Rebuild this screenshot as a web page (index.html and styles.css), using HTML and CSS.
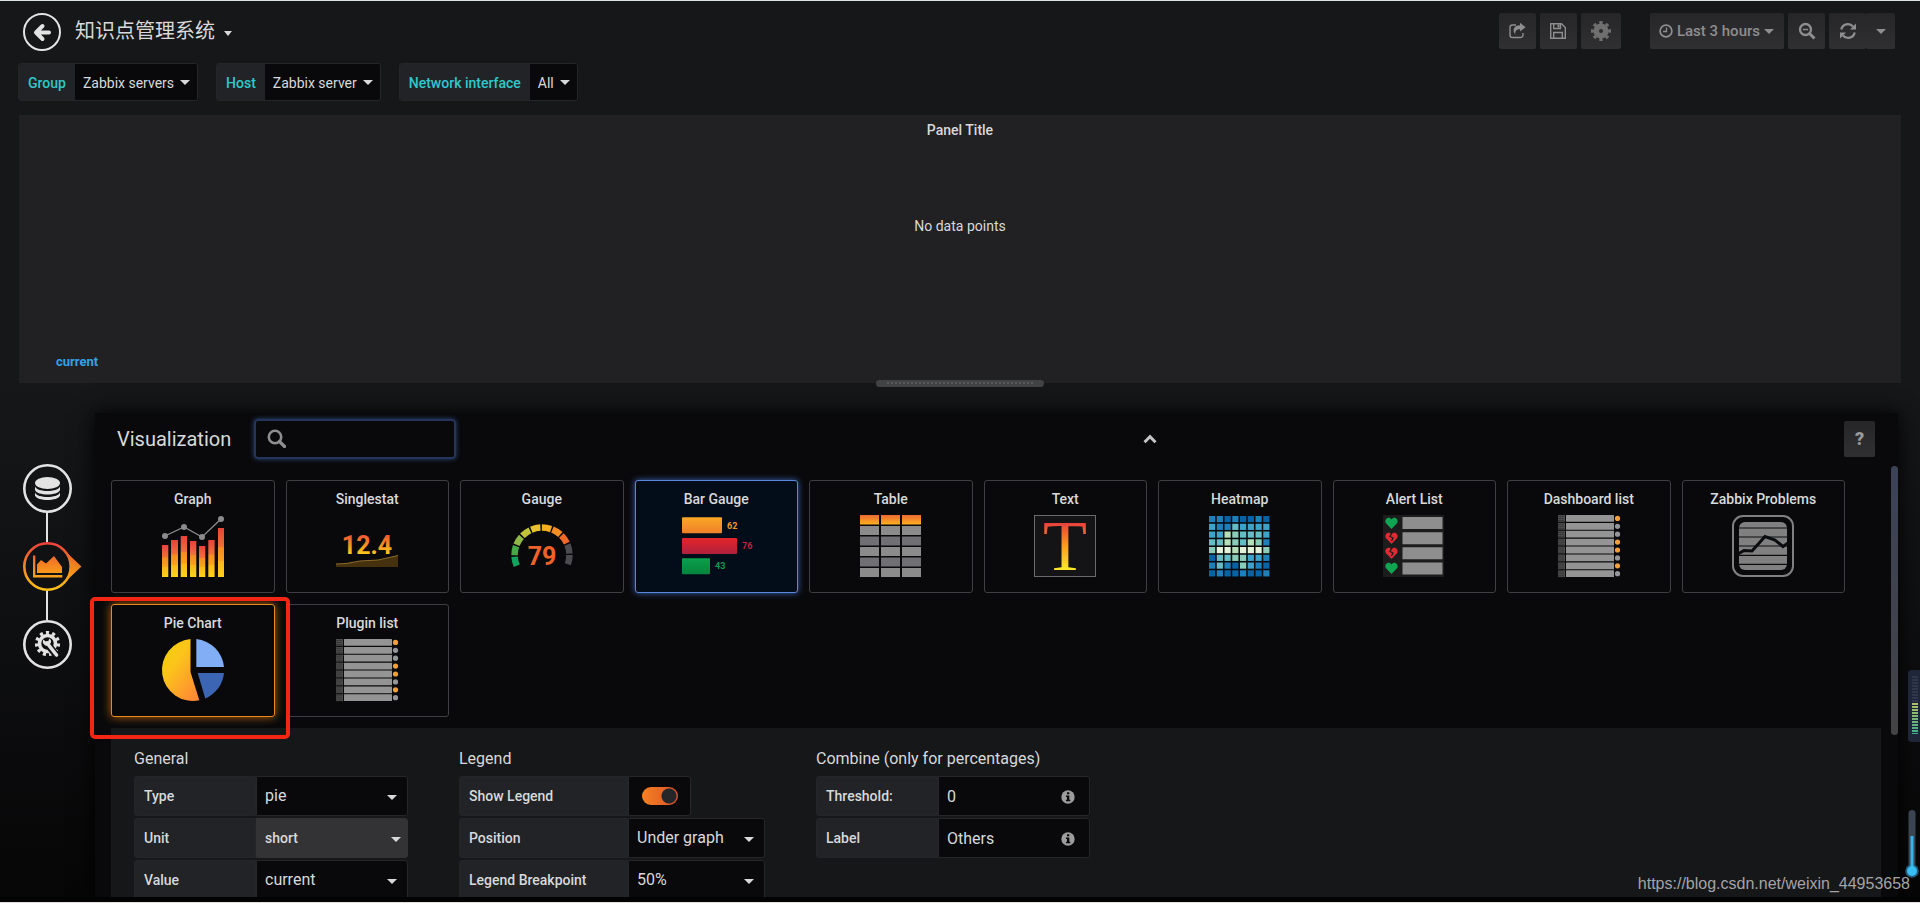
FILE: index.html
```
<!DOCTYPE html>
<html lang="zh-CN">
<head>
<meta charset="utf-8">
<title>知识点管理系统</title>
<link rel="stylesheet" href="styles.css">
</head>
<body>
<header class="navbar">
  <button class="back" aria-label="Back"><svg viewBox="0 0 20 20" width="20" height="20"><path d="M10.500 4 4 10.500 10.500 17M5 10.500H17" fill="none" stroke="currentColor" stroke-width="4" stroke-linecap="round" stroke-linejoin="round"/></svg></button>
  <button class="dash-title">知识点管理系统<span class="caret"></span></button>
  <div class="nav-group">
    <button class="nav-btn" aria-label="Share"><svg viewBox="0 0 18 18" width="18" height="18"><path d="M8 3H4.500A2.500 2.500 0 0 0 2 5.500V13a2.500 2.500 0 0 0 2.500 2.500h8A2.500 2.500 0 0 0 15 13v-2" fill="none" stroke="currentColor" stroke-width="1.400"/><path d="M12 .8 17.600 5.200 12 9.600V7.200C8.500 7.200 7 8.500 7.300 12.600 3.800 8 6 3.400 12 3.300Z" fill="currentColor"/></svg></button>
    <button class="nav-btn" aria-label="Save"><svg viewBox="0 0 18 18" width="18" height="18"><path d="M1.700 1.700H12.500L16.300 5.500V16.300H1.700ZM4.700 1.700V6.500H11.500V1.700M4.700 16V10.500H13.300V16" fill="none" stroke="currentColor" stroke-width="1.400"/><path d="M8.500 2.500h2v3h-2z" fill="currentColor"/></svg></button>
    <button class="nav-btn wide" aria-label="Settings"><svg viewBox="0 0 20 20" width="20" height="20"><circle cx="10" cy="10" r="4.800" fill="none" stroke="currentColor" stroke-width="5.600"/><circle cx="10" cy="10" r="8.500" fill="none" stroke="currentColor" stroke-width="3" pathLength="80" stroke-dasharray="5 5" stroke-dashoffset="2.500"/></svg></button>
  </div>
  <div class="nav-group">
    <button class="nav-btn time"><svg viewBox="0 0 14 14" width="14" height="14"><circle cx="7" cy="7" r="5.900" fill="none" stroke="currentColor" stroke-width="1.700"/><path d="M7.500 3.500V7.500H4" fill="none" stroke="currentColor" stroke-width="1.300"/></svg>Last 3 hours<span class="caret"></span></button>
    <button class="nav-btn" aria-label="Zoom out"><svg viewBox="0 0 18 18" width="18" height="18"><circle cx="7.500" cy="7.500" r="5.500" fill="none" stroke="currentColor" stroke-width="2.300"/><path d="M4.800 7.500h5.400" stroke="currentColor" stroke-width="1.500"/><path d="m11.500 11.500 5 5" stroke="currentColor" stroke-width="3"/></svg></button>
    <span class="nav-pair"><button class="nav-btn" aria-label="Refresh"><svg viewBox="0 0 18 18" width="18" height="18"><path d="M2.300 7.500A6.700 6.700 0 0 1 14 4.600M15.700 10.500A6.700 6.700 0 0 1 4 13.400" fill="none" stroke="currentColor" stroke-width="2.300"/><path d="M17 1.500V7.500H11ZM1 16.500V10.500H7Z" fill="currentColor"/></svg></button><button class="nav-btn interval" aria-label="Refresh interval"><span class="caret"></span></button></span>
  </div>
</header>

<nav class="variables">
  <div class="variable"><span class="var-name" id="v1">Group</span><button class="var-value" aria-labelledby="v1">Zabbix servers<span class="caret"></span></button></div>
  <div class="variable"><span class="var-name" id="v2">Host</span><button class="var-value" aria-labelledby="v2">Zabbix server<span class="caret"></span></button></div>
  <div class="variable"><span class="var-name" id="v3">Network interface</span><button class="var-value" aria-labelledby="v3">All<span class="caret"></span></button></div>
</nav>

<section class="panel">
  <h1 class="panel-title">Panel Title</h1>
  <p class="panel-empty">No data points</p>
  <a class="panel-legend" href="#">current</a>
  <div class="resize-handle"><span></span></div>
</section>

<section class="workspace">
  <aside class="tabs">
    <button class="tab" aria-label="Queries"><svg viewBox="0 0 49 49" width="49" height="49"><circle cx="24.500" cy="24.500" r="23.200" fill="none" stroke="#e3e3e3" stroke-width="2.600"/><g fill="#e3e3e3"><ellipse cx="24.500" cy="19" rx="12.500" ry="6"/><path d="M12 22.500c2 6 23 6 25 0v3.500c-2 6-23 6-25 0ZM12 28.500c2 6 23 6 25 0v3c-2 6-23 6-25 0Z"/></g></svg></button>
    <span class="link"></span>
    <button class="tab" aria-label="Visualization"><svg viewBox="0 0 49 49" width="49" height="49"><defs><linearGradient id="hot" x1="0" y1="0" x2="0" y2="49" gradientUnits="userSpaceOnUse"><stop offset="0" stop-color="#ee3f3c"/><stop offset=".5" stop-color="#f5881f"/><stop offset="1" stop-color="#fcc419"/></linearGradient></defs><path d="M42 9 58.500 24.500 42 40C49 32 49 17 42 9Z" fill="url(#hot)"/><circle cx="24.500" cy="24.500" r="23.200" fill="none" stroke="url(#hot)" stroke-width="2.600"/><path d="M10 13.500h2.300v19.500h27v2.500H10ZM14 31V22.500l4-4.500 5 3.500 8-7.500 8 11V31Z" fill="url(#hot)"/></svg></button>
    <span class="link"></span>
    <button class="tab" aria-label="General"><svg viewBox="0 0 49 49" width="49" height="49"><circle cx="24.500" cy="24.500" r="23.200" fill="none" stroke="#e3e3e3" stroke-width="2.600"/><circle cx="24.500" cy="23.500" r="8" fill="none" stroke="#e3e3e3" stroke-width="3.600"/><circle cx="24.500" cy="23.500" r="11" fill="none" stroke="#e3e3e3" stroke-width="3.200" pathLength="110" stroke-dasharray="5 5"/><path d="m26 26 8 10" stroke="#111214" stroke-width="7"/><path d="m24 23 9.500 12" stroke="#e3e3e3" stroke-width="3.600" stroke-linecap="round"/><path d="M20.500 19.500a4 4 0 1 0 6-1l-1.500 3-2.500 0Z" fill="#e3e3e3"/></svg></button>
  </aside>

  <main class="editor">
    <div class="editor-head">
      <label class="editor-title" for="search">Visualization</label>
      <div class="search"><svg viewBox="0 0 19 19" width="19" height="19"><circle cx="8" cy="8" r="6.200" fill="none" stroke="#8e8e8e" stroke-width="2.600"/><path d="m12.500 12.500 5 5" stroke="#8e8e8e" stroke-width="3.200" stroke-linecap="round"/></svg><input id="search" type="text"></div>
      <button class="collapse" aria-label="Collapse"><svg viewBox="0 0 14 10" width="14" height="10"><path d="M1.500 8.200 7 2.700l5.500 5.500" fill="none" stroke="#c4c4c4" stroke-width="3"/></svg></button>
      <button class="help">?</button>
    </div>

    <div class="editor-body">
      <div class="scroll">
        <div class="cards">
          <button class="card"><span>Graph</span><svg class="icon" viewBox="0 0 62 62"><defs><linearGradient id="bar" x1="0" y1="0" x2="0" y2="1"><stop offset="0" stop-color="#e8433b"/><stop offset=".38" stop-color="#ef7138"/><stop offset=".4" stop-color="#f48b22"/><stop offset=".67" stop-color="#f9a51c"/><stop offset=".68" stop-color="#fbb81a"/><stop offset="1" stop-color="#fdd21a"/></linearGradient></defs><g fill="url(#bar)"><path d="M0 30h6.300v32H0z"/><path d="M9 25h7v37H9z"/><path d="M18.700 21h6.300v41h-6.300z"/><path d="M28 26h6.300v36H28z"/><path d="M37 31h6.300v31H37z"/><path d="M46.300 25h6.300v37h-6.300z"/><path d="M56 13h6v49h-6z"/></g><path d="M3 21 22 12 40 22 59 4" fill="none" stroke="#8b8b8b" stroke-width="1.300"/><g fill="#8b8b8b"><circle cx="3" cy="21" r="3"/><circle cx="22" cy="12" r="3"/><circle cx="40" cy="22" r="3"/><circle cx="59" cy="4" r="3"/></g></svg></button>
          <button class="card"><span>Singlestat</span><svg class="icon" viewBox="0 0 62 62"><defs><linearGradient id="stat" x1="0" y1="18" x2="0" y2="40" gradientUnits="userSpaceOnUse"><stop offset="0" stop-color="#ec4a3a"/><stop offset=".5" stop-color="#f68b1f"/><stop offset="1" stop-color="#fcd01b"/></linearGradient></defs><path d="M0 49 10 48.500 24 46 42 45 62 40.500V52H0Z" fill="#46310f"/><path d="M0 49 10 48.500 24 46 42 45 62 40.500" fill="none" stroke="#8c6a2a"/><text x="31" y="39" class="num-lg" fill="url(#stat)">12.4</text></svg></button>
          <button class="card"><span>Gauge</span><svg class="icon" viewBox="0 0 62 62"><g fill="none" stroke-width="6.500"><path stroke="#12a35c" d="M5.770 50.830A27.500 27.500 0 0 1 3.600 41.800"/><path stroke="#46a948" d="M5.770 50.830A27.500 27.500 0 0 1 3.600 41.800" transform="rotate(22.600 31 40)"/><path stroke="#8fb746" d="M5.770 50.830A27.500 27.500 0 0 1 3.600 41.800" transform="rotate(45.200 31 40)"/><path stroke="#c0c23a" d="M5.770 50.830A27.500 27.500 0 0 1 3.600 41.800" transform="rotate(67.800 31 40)"/><path stroke="#e8c22c" d="M5.770 50.830A27.500 27.500 0 0 1 3.600 41.800" transform="rotate(90.400 31 40)"/><path stroke="#f6ad20" d="M5.770 50.830A27.500 27.500 0 0 1 3.600 41.800" transform="rotate(113 31 40)"/><path stroke="#f38d24" d="M5.770 50.830A27.500 27.500 0 0 1 3.600 41.800" transform="rotate(135.600 31 40)"/><path stroke="#ee6a26" d="M5.770 50.830A27.500 27.500 0 0 1 3.600 41.800" transform="rotate(158.200 31 40)"/><path stroke="#4b4b50" d="M5.770 50.830A27.500 27.500 0 0 1 3.600 41.800" transform="rotate(180.800 31 40)"/><path stroke="#4b4b50" d="M5.770 50.830A27.500 27.500 0 0 1 3.600 41.800" transform="rotate(203.400 31 40)"/></g><text x="31" y="50" class="num-lg" fill="#f1622a">79</text></svg></button>
          <button class="card current"><span>Bar Gauge</span><svg class="icon" viewBox="0 0 62 62"><defs><linearGradient id="bo" x1="0" y1="0" x2="0" y2="1"><stop offset="0" stop-color="#f9a825"/><stop offset="1" stop-color="#f0802a"/></linearGradient><linearGradient id="br" x1="0" y1="0" x2="0" y2="1"><stop offset="0" stop-color="#e5242b"/><stop offset="1" stop-color="#b0203c"/></linearGradient><linearGradient id="bg" x1="0" y1="0" x2="0" y2="1"><stop offset="0" stop-color="#0ba04d"/><stop offset="1" stop-color="#05843c"/></linearGradient></defs><rect x="-3" y="2.300" width="40" height="16" rx="1" fill="url(#bo)"/><rect x="-3" y="23" width="55" height="16" rx="1" fill="url(#br)"/><rect x="-3" y="43.300" width="28" height="16" rx="1" fill="url(#bg)"/><text x="42" y="14" class="num-sm" fill="#f39a2b">62</text><text x="57" y="34" class="num-sm" fill="#c4213c">76</text><text x="30" y="54" class="num-sm" fill="#0d9a4a">43</text></svg></button>
          <button class="card"><span>Table</span><svg class="icon" viewBox="0 0 62 62"><defs><linearGradient id="th" x1="0" y1="0" x2="0" y2="1"><stop offset="0" stop-color="#ee6a35"/><stop offset="1" stop-color="#fbb01f"/></linearGradient></defs><path fill="url(#th)" d="M0 0h19v9.500H0zM21 0h19v9.500H21zM42 0h19v9.500H42z"/><path fill="#8b8b8b" d="M0 11h19v9H0zM21 11h19v9H21zM42 11h19v9H42zM0 32h19v9H0zM21 32h19v9H21zM42 32h19v9H42zM0 53h19v9H0zM21 53h19v9H21zM42 53h19v9H42z"/><path fill="#707074" d="M0 21.500h19v9H0zM21 21.500h19v9H21zM42 21.500h19v9H42zM0 42.500h19v9H0zM21 42.500h19v9H21zM42 42.500h19v9H42z"/></svg></button>
          <button class="card"><span>Text</span><svg class="icon" viewBox="0 0 62 62"><defs><linearGradient id="tt" x1="0" y1="8" x2="0" y2="55" gradientUnits="userSpaceOnUse"><stop offset="0" stop-color="#e8403c"/><stop offset=".5" stop-color="#f9a01e"/><stop offset="1" stop-color="#fde92a"/></linearGradient></defs><rect x=".5" y=".5" width="61" height="61" fill="#141416" stroke="#6a6a6a"/><text x="31" y="55" class="big-t" fill="url(#tt)">T</text></svg></button>
          <button class="card"><span>Heatmap</span><svg class="icon" id="heat" viewBox="0 0 62 62"></svg></button>
          <button class="card"><span>Alert List</span><svg class="icon" viewBox="0 0 62 62"><path fill="#1c1c1d" d="M0 0h61v62H0z"/><path fill="#8e8e8e" d="M19.500 2h40v12h-40zM19.500 17.300h40v12h-40zM19.500 32.300h40v12h-40zM19.500 47.600h40v12h-40z"/><g fill="#10a552"><path d="M8.500 14 2.800 8C.8 4 6 .5 8.500 4.500 11 .5 16.200 4 14.200 8Z"/><path d="M8.500 59 2.800 53C.8 49 6 45.500 8.500 49.500 11 45.500 16.200 49 14.200 53Z"/></g><g fill="#e02b34"><path d="M8.500 29 2.800 23C.8 19 6 15.500 8.500 19.500 11 15.500 16.200 19 14.200 23Z"/><path d="M8.500 44 2.800 38C.8 34 6 30.500 8.500 34.500 11 30.500 16.200 34 14.200 38Z"/></g><path d="m8.500 18.500-1.500 3 3 1.500-1.500 3M8.500 33.500l-1.500 3 3 1.500-1.500 3" fill="none" stroke="#1c1c1d" stroke-width="1.300"/></svg></button>
          <button class="card"><span>Dashboard list</span><svg class="icon list-icon" viewBox="0 0 62 62"></svg></button>
          <button class="card"><span>Zabbix Problems</span><svg class="icon" viewBox="0 0 62 62"><rect x="1" y="1" width="60" height="60" rx="10" fill="none" stroke="#808080" stroke-width="2"/><rect x="7" y="7" width="48" height="48" rx="6" fill="#808080"/><path d="M7 13h48M7 22h48M7 31h48M7 40.300h48M7 49.300h48" stroke="#0b0c0e" stroke-width="1.200"/><path d="m6 39 6-3.500 8 .5L33 21.500l10 3.500 8 6.500 5-3.500" fill="none" stroke="#0b0c0e" stroke-width="3"/></svg></button>
          <button class="card selected"><span>Pie Chart</span><svg class="icon" viewBox="0 0 62 62"><defs><linearGradient id="pie" x1="0" y1="0" x2=".8" y2="1"><stop offset="0" stop-color="#f2cf0a"/><stop offset=".4" stop-color="#fbc51a"/><stop offset="1" stop-color="#ff8a35"/></linearGradient></defs><path d="M28.500 .1V33L37.300 61.350A31 31 0 1 1 28.500 .1Z" fill="url(#pie)"/><path d="M34.300 0A31 31 0 0 1 62 28H34.300Z" fill="#82aef5"/><path d="M35.700 34H62A31 31 0 0 1 43.300 59.500Z" fill="#3c66b4"/></svg><i class="highlight"></i></button>
          <button class="card"><span>Plugin list</span><svg class="icon list-icon" viewBox="0 0 62 62"></svg></button>
        </div>

        <form class="options">
          <fieldset class="group">
            <legend>General</legend>
            <div class="row"><label class="name" for="type">Type</label><span class="pick"><select id="type"><option>pie</option></select></span></div>
            <div class="row"><label class="name" for="unit">Unit</label><span class="pick flat"><select id="unit"><option>short</option></select></span></div>
            <div class="row"><label class="name" for="value">Value</label><span class="pick"><select id="value"><option>current</option></select></span></div>
          </fieldset>
          <fieldset class="group legend-group">
            <legend>Legend</legend>
            <div class="row"><label class="name" for="show">Show Legend</label><span class="toggle"><input id="show" type="checkbox" checked></span></div>
            <div class="row"><label class="name" for="pos">Position</label><span class="pick"><select id="pos"><option>Under graph</option></select></span></div>
            <div class="row"><label class="name" for="bp">Legend Breakpoint</label><span class="pick"><select id="bp"><option>50%</option></select></span></div>
          </fieldset>
          <fieldset class="group">
            <legend>Combine (only for percentages)</legend>
            <div class="row"><label class="name" for="thr">Threshold:</label><span class="field"><input id="thr" type="text" value="0"><svg viewBox="0 0 14 14" width="14" height="14"><circle cx="7" cy="7" r="6.700" fill="#9c9c9c"/><path d="M6 2.300h2.300v2H6zM5 5.500h3.300v4.300h1v1.500H5V9.800h1V7H5Z" fill="#09090b"/></svg></span></div>
            <div class="row"><label class="name" for="lab">Label</label><span class="field"><input id="lab" type="text" value="Others"><svg viewBox="0 0 14 14" width="14" height="14"><circle cx="7" cy="7" r="6.700" fill="#9c9c9c"/><path d="M6 2.300h2.300v2H6zM5 5.500h3.300v4.300h1v1.500H5V9.800h1V7H5Z" fill="#09090b"/></svg></span></div>
          </fieldset>
        </form>
      </div>
      <div class="scrollbar"></div>
    </div>
  </main>
</section>

<div class="meter"><span></span></div>
<svg class="thermo" viewBox="0 0 14 68" width="14" height="68"><rect x="3.500" width="7" height="64" rx="3.500" fill="#3b4552"/><circle cx="7" cy="61" r="6.800" fill="#245a78"/><path d="M5.500 26h3v32h-3z" fill="#35b4ea"/><circle cx="7" cy="61" r="5" fill="#38bdf2"/></svg>
<p class="watermark">https://blog.csdn.net/weixin_44953658</p>
<script src="icons.js"></script>
</body>
</html>
```
FILE: styles.css
```
* { box-sizing: border-box; }
body {
  margin: 0;
  height: 100vh;
  overflow: hidden;
  display: flex;
  flex-direction: column;
  position: relative;
  border-top: 1px solid #dbe2e2;
  border-bottom: 1px solid #e6dede;
  background: #161719;
  color: #d8d9da;
  font: 14px/20px Roboto, "Noto Sans CJK SC", sans-serif;
}
button, input, select { font: inherit; color: inherit; margin: 0; }
button { border: 0; padding: 0; background: none; }
svg { display: block; flex: none; }

.caret {
  flex: none;
  border: 5px solid transparent;
  border-top-color: currentColor;
  border-bottom: 0;
}

/* top bar */
.navbar { display: flex; align-items: flex-start; height: 62px; padding: 12px 25px 0 23px; }
.back {
  width: 38px; height: 38px;
  display: flex; align-items: center; justify-content: center;
  border: 2px solid #e3e3e3; border-radius: 50%;
  color: #e3e3e3;
}
.dash-title { display: flex; align-items: center; gap: 9px; height: 36px; margin: 0 auto 0 14px; font-size: 20px; line-height: 28px; font-weight: 400; }
.dash-title .caret { margin-top: 4px; border-width: 5px 4px 0; }
.nav-group { display: flex; gap: 4px; margin-left: 29px; }
.nav-btn {
  display: flex; align-items: center; justify-content: center;
  width: 37px; height: 36px;
  border-radius: 2px;
  background: linear-gradient(#262628, #303032);
  color: #8e8e8e;
  font-weight: 500;
}
.nav-btn.wide { width: 40px; color: #6f6f6f; }
.nav-btn.time { width: auto; padding: 0 10px 0 9px; gap: 4px; font-size: 15px; }
.nav-pair { display: flex; }
.nav-btn.interval { width: 29px; }

/* template variables */
.variables { display: flex; gap: 18px; padding: 0 18px; }
.variable { display: flex; height: 38px; border: 1px solid #262628; border-radius: 3px; overflow: hidden; }
.var-name { padding: 0 9px; line-height: 38px; background: #212327; color: #2fc8cc; font-weight: 500; }
.var-value { display: flex; align-items: center; gap: 6px; padding: 1px 7px 0 8px; background: #09090b; }

/* graph panel */
.panel {
  display: flex; flex-direction: column; align-items: center;
  height: 268px; flex: none;
  margin: 14px 19px 0;
  background: #212124;
}
.panel-title { margin: 5px 0 0; font-size: 14px; line-height: 20px; font-weight: 500; }
.panel-empty { margin: 76px 0 auto; }
.panel-legend { align-self: flex-start; margin-left: 37px; color: #33a2e5; font-size: 13px; font-weight: 700; text-decoration: none; }
.resize-handle { width: 168px; height: 7px; margin: 8px 0 -4px; padding: 2px 11px; border-radius: 4px; background: #424345; z-index: 1; }
.resize-handle span { display: block; height: 2px; background: repeating-linear-gradient(90deg, #5a5a5c 0 2px, transparent 2px 4px); }

/* editor */
.workspace {
  flex: 1; min-height: 0;
  display: flex;
  overflow: hidden;
  padding: 30px 22px 0 0;
  border-bottom: 5px solid #030304;
  background: linear-gradient(#161719, #060607);
}
.tabs { width: 95px; flex: none; display: flex; flex-direction: column; align-items: center; padding: 51px 1px 0 0; }
.tab svg { overflow: visible; }
.link { width: 2px; height: 29px; background: #e3e3e3; }
.editor { flex: 1; min-width: 0; background: #09090b; box-shadow: 0 0 20px #000; }
.editor-head { display: flex; align-items: center; height: 53px; padding: 0 23px 2px 22px; }
.editor-title { font-size: 20px; line-height: 24px; }
.search {
  display: flex; align-items: center; gap: 8px;
  width: 202px; height: 40px;
  margin-left: 23px; padding: 0 11px;
  border: 2px solid #23355a; border-radius: 4px;
  box-shadow: 0 0 5px #2b4878;
}
.search input { width: 100%; border: 0; outline: 0; background: none; }
.collapse { margin: 0 auto; }
.help { width: 31px; height: 36px; border-radius: 2px; background: linear-gradient(#262628, #303032); color: #9a9a9a; font-size: 18px; font-weight: 900; }
.editor-body { display: flex; gap: 10px; }
.scroll { flex: 1; min-width: 0; padding: 14px 0 0 16px; }
.scrollbar { width: 7px; height: 269px; border-radius: 4px; background: linear-gradient(#3c4257, #434345); }

.cards { display: grid; grid-template-columns: repeat(10, 1fr); gap: 11px; margin-right: 36px; }
.card {
  position: relative;
  display: flex; flex-direction: column; align-items: center;
  gap: 6px;
  height: 113px;
  padding: 8px 0 0;
  border: 1px solid #3e3f42; border-radius: 3px;
  font-weight: 500;
}
.icon { width: 62px; height: 62px; overflow: visible; }
.current { border-color: #5a86dc; background: #030d1a; box-shadow: 0 0 6px #3a62b4; }
.selected { border-color: #eb8a1c; box-shadow: 0 0 10px #b8640e; }
.highlight { position: absolute; z-index: 2; inset: -8px -16px -23px -22px; border: 4px solid #f22613; border-radius: 5px; }
.num-lg { font: 700 25px Roboto, sans-serif; text-anchor: middle; }
.num-sm { font: 700 9px Roboto, sans-serif; }
.big-t { font: 72px "Liberation Serif", serif; text-anchor: middle; }

.options { display: flex; align-items: flex-start; gap: 51px; margin-top: 11px; padding: 21px 23px; background: #161719; }
.group { min-width: 0; margin: 0; padding: 0; border: 0; }
.group legend { padding: 0; margin-bottom: 7px; font-size: 16px; line-height: 20px; }
.row { display: flex; height: 40px; margin-bottom: 2px; }
.name { width: 122px; padding: 0 9px; line-height: 38px; border: 1px solid #242528; border-radius: 3px 0 0 3px; background: #212327; font-weight: 500; }
.legend-group .name { width: 169px; }
.pick, .field { display: grid; align-items: center; width: 152px; border: 1px solid #262628; border-radius: 0 3px 3px 0; background: #09090b; }
.legend-group .pick { width: 137px; }
.pick select, .pick::after, .field input, .field svg { grid-area: 1 / 1; }
.pick::after { content: ""; justify-self: end; margin: 2px 10px 0 0; border: 5px solid transparent; border-top-color: #d8d9da; border-bottom: 0; pointer-events: none; }
.pick select, .field input { width: 100%; height: 38px; padding: 0 8px; border: 0; background: none; appearance: none; font-size: 16px; }
.pick.flat { background: #333335; border-color: #333335; }
.pick.flat::after { margin-right: 6px; }
.pick.flat select { font-size: 14px; font-weight: 500; }
.field svg { justify-self: end; margin: 2px 14px 0 0; }
.toggle { display: flex; align-items: center; justify-content: center; width: 63px; border: 1px solid #262628; border-radius: 0 3px 3px 0; background: #09090b; }
.toggle input { appearance: none; width: 36px; height: 18px; border-radius: 9px; background: radial-gradient(circle at 27px 50%, #262628 7px, transparent 8px), linear-gradient(90deg, #f48120, #d9532c); }

/* overlays at the window edge */
.meter { position: absolute; right: 0; bottom: 160px; width: 12px; height: 72px; padding: 6px 2px 8px 4px; border-radius: 4px 0 0 4px; background: #20263a; }
.meter span { display: block; height: 58px; background: repeating-linear-gradient(transparent 0 2px, #20263a 2px 3px), linear-gradient(#2f364c 0 26px, #b5c06a 26px, #3fae8c); }
.thermo { position: absolute; right: 1px; bottom: 24px; }
.watermark { position: absolute; right: 10px; bottom: 8px; margin: 0; color: #a4a4a6; font: 16px/20px "Liberation Sans", sans-serif; }
```
FILE: icons.js
```
const NS = "http://www.w3.org/2000/svg";
function add(svg, tag, attrs) {
  const el = document.createElementNS(NS, tag);
  for (const key in attrs) el.setAttribute(key, attrs[key]);
  svg.appendChild(el);
}

const shades = ["", "#0863a5", "#1f7fb8", "#3ea3c8", "#65bcc4", "#8accb8", "#b5dfb8", "#e3f3da"];
const cells = ["22121121", "32243333", "33654443", "44654652", "57767775", "14455332", "24215321", "12112112"];
const heat = document.getElementById("heat");
cells.forEach((row, y) => [...row].forEach((c, x) =>
  add(heat, "rect", { x: x * 7.75, y: 1 + y * 7.75, width: 6.2, height: 6.2, fill: shades[c] })));

document.querySelectorAll(".list-icon").forEach(svg => {
  for (let i = 0; i < 8; i++) {
    const y = i * 7.9;
    add(svg, "rect", { x: 0, y, width: 7, height: 6.8, fill: "#4c4c4c" });
    add(svg, "path", { d: `M.5 ${y + 1.5}h6M.5 ${y + 3.5}h6M.5 ${y + 5.5}h6`, stroke: "#242424", "stroke-dasharray": "1 1" });
    add(svg, "rect", { x: 8, y, width: 48, height: 6.8, rx: 0.5, fill: "#949494" });
    add(svg, "circle", { cx: 59.5, cy: y + 3.4, r: 2.6, fill: [0, 3, 4, 6].includes(i) ? "#efa03c" : "#94969a" });
  }
});
```
